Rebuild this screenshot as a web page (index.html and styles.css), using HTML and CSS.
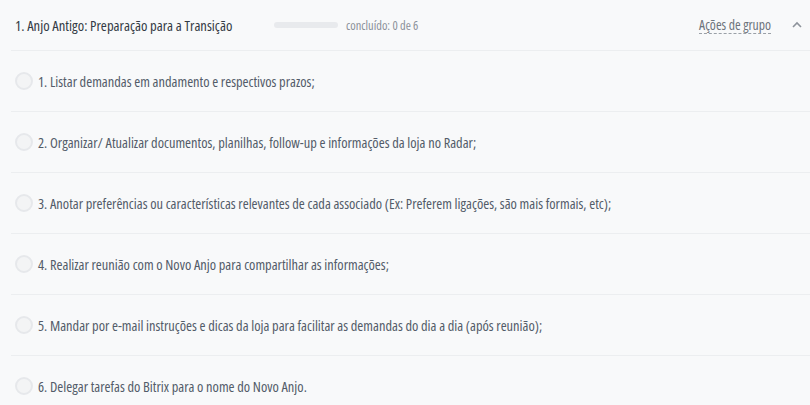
FILE: index.html
```html
<!DOCTYPE html>
<html lang="pt-BR">
<head>
<meta charset="utf-8">
<link rel="stylesheet" href="styles.css">
</head>
<body>
<div class="checklist">
  <div class="group-head">
    <div class="group-title">1. Anjo Antigo: Preparação para a Transição</div>
    <div class="progress"><div class="progress-fill" style="width:0%"></div></div>
    <div class="progress-text">concluído: 0 de 6</div>
    <div class="spacer"></div>
    <span class="group-actions">Ações de grupo</span>
    <svg class="chevron" width="10" height="7" viewBox="0 0 10 7"><path d="M1 6 L5 2 L9 6" fill="none" stroke="#8d939b" stroke-width="1.6"/></svg>
  </div>
  <div class="item"><span class="check"></span><span class="item-text">1. Listar demandas em andamento e respectivos prazos;</span></div>
  <div class="item"><span class="check"></span><span class="item-text">2. Organizar/ Atualizar documentos, planilhas, follow-up e informações da loja no Radar;</span></div>
  <div class="item"><span class="check"></span><span class="item-text">3. Anotar preferências ou características relevantes de cada associado (Ex: Preferem ligações, são mais formais, etc);</span></div>
  <div class="item"><span class="check"></span><span class="item-text">4. Realizar reunião com o Novo Anjo para compartilhar as informações;</span></div>
  <div class="item"><span class="check"></span><span class="item-text">5. Mandar por e-mail instruções e dicas da loja para facilitar as demandas do dia a dia (após reunião);</span></div>
  <div class="item last"><span class="check"></span><span class="item-text">6. Delegar tarefas do Bitrix para o nome do Novo Anjo.</span></div>
</div>
</body>
</html>
```
FILE: styles.css
```css
html, body {
  margin: 0;
  padding: 0;
  background: #f8f9fa;
}
body {
  font-family: "Open Sans", "Noto Sans", sans-serif;
  font-stretch: condensed;
  color: #535c69;
}
.checklist {
  padding-left: 11px;
}
.group-head {
  display: flex;
  align-items: center;
  height: 50px;
  border-bottom: 1px solid #eceef0;
  padding-left: 4px;
  padding-right: 8px;
}
.group-title {
  font-size: 14.6px;
  color: #333a44;
  font-weight: 500;
  width: 259px;
  flex: none;
}
.progress {
  width: 64px;
  height: 6px;
  border-radius: 3px;
  background: #e8eaed;
  flex: none;
}
.progress-fill {
  height: 100%;
  background: #9dcf00;
  border-radius: 3px;
}
.progress-text {
  margin-left: 8px;
  font-size: 12.4px;
  color: #8a9099;
}
.spacer { flex: 1; }
.group-actions {
  font-size: 13.7px;
  color: #6d737b;
  border-bottom: 1px dashed #9aa0a7;
  line-height: 16px;
  margin-right: 21px;
}
.chevron { display: block; margin-top: -2px; }
.item {
  display: flex;
  align-items: center;
  height: 60px;
  border-bottom: 1px solid #eceef0;
  padding-left: 4px;
}
.item.last { border-bottom: none; }
.check {
  width: 14px;
  height: 14px;
  border: 2px solid #e6e8eb;
  border-radius: 50%;
  background: #f3f4f5;
  flex: none;
  margin-right: 5px;
}
.item-text {
  font-size: 14.4px;
  color: #535c69;
}
```
